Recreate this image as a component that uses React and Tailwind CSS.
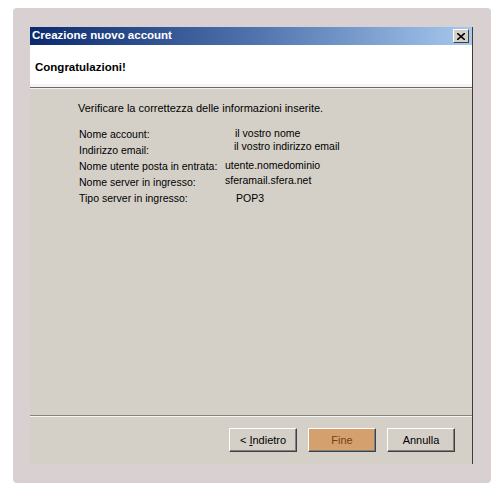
const rows = [
  { label: 'Nome account:', value: 'il vostro nome', shift: 'ml-[10px] -translate-y-[1px]' },
  { label: 'Indirizzo email:', value: 'il vostro indirizzo email', shift: 'ml-[9px] -translate-y-[4px]' },
  { label: 'Nome utente posta in entrata:', value: 'utente.nomedominio', shift: 'ml-0 -translate-y-[1px]' },
  { label: 'Nome server in ingresso:', value: 'sferamail.sfera.net', shift: 'ml-0 -translate-y-[2px]' },
  { label: 'Tipo server in ingresso:', value: 'POP3', shift: 'ml-[11px]' },
];

const WinButton = ({ children, className = '' }) => (
  <button
    className={`w-[68px] h-[24px] border border-t-white border-l-white border-r-[#404040] border-b-[#404040] shadow-[inset_-1px_-1px_0_#808080] text-[11px] ${className}`}
  >
    {children}
  </button>
);

const App = () => {
  return (
    <div
      className="w-[503px] h-[497px] bg-white pt-[8px] pl-[13px]"
      style={{ fontFamily: '"Liberation Sans", Arial, sans-serif' }}
    >
      <div className="w-[478px] h-[475px] bg-[#d9d1d1] rounded-[4px] pt-[19px] pl-[17px]">
        <div className="w-[443px] h-[437px] flex flex-col bg-[#d4d0c8] border-r border-[#3c3c3c]">
          {/* title bar */}
          <div className="h-[18px] flex items-center justify-between pl-[2px] pr-[3px] bg-gradient-to-r from-[#0c2a6e] via-[#4f72ad] to-[#a7c9ee]">
            <span className="text-white font-bold text-[11.5px]">Creazione nuovo account</span>
            <span className="w-[16px] h-[14px] flex items-center justify-center bg-[#d4d0c8] border border-t-white border-l-white border-r-[#404040] border-b-[#404040]">
              <svg width="8" height="7" viewBox="0 0 8 7">
                <path d="M0 0 L8 7 M8 0 L0 7" stroke="#000" strokeWidth="1.6" />
              </svg>
            </span>
          </div>

          {/* header */}
          <div className="h-[42px] bg-white pl-[5px] pt-[9px] border-b-[3px] border-[#f4f4f4]">
            <span className="font-bold text-[11.5px] text-black">Congratulazioni!</span>
          </div>
          <div className="h-px bg-[#6e6a6a]" />
          <div className="h-px bg-white/70" />

          {/* content */}
          <div className="flex-1 flex flex-col pl-[48px] pt-[12px] text-black">
            <div className="h-[14px] leading-[14px] text-[11px]">Verificare la correttezza delle informazioni inserite.</div>
            <div className="mt-[11px] flex flex-col text-[10.5px]">
              {rows.map((r) => (
                <div key={r.label} className="h-[16px] leading-[16px] flex ml-[1px]">
                  <span className="w-[146px]">{r.label}</span>
                  <span className={`${r.shift}`}>{r.value}</span>
                </div>
              ))}
            </div>
          </div>

          {/* footer */}
          <div className="h-px bg-[#888282]" />
          <div className="h-px bg-white/80" />
          <div className="h-[47px] flex items-start justify-end gap-[11px] pt-[11px] pr-[17px]">
            <WinButton className="bg-[#d4d0c8] text-black">
              &lt; <span className="underline">I</span>ndietro
            </WinButton>
            <WinButton className="bg-[#d4a06e] text-[#7a3e10] border-t-[#3c3c3c] border-l-[#3c3c3c]">Fine</WinButton>
            <WinButton className="bg-[#d4d0c8] text-black">Annulla</WinButton>
          </div>
        </div>
      </div>
    </div>
  );
};

export default App;
